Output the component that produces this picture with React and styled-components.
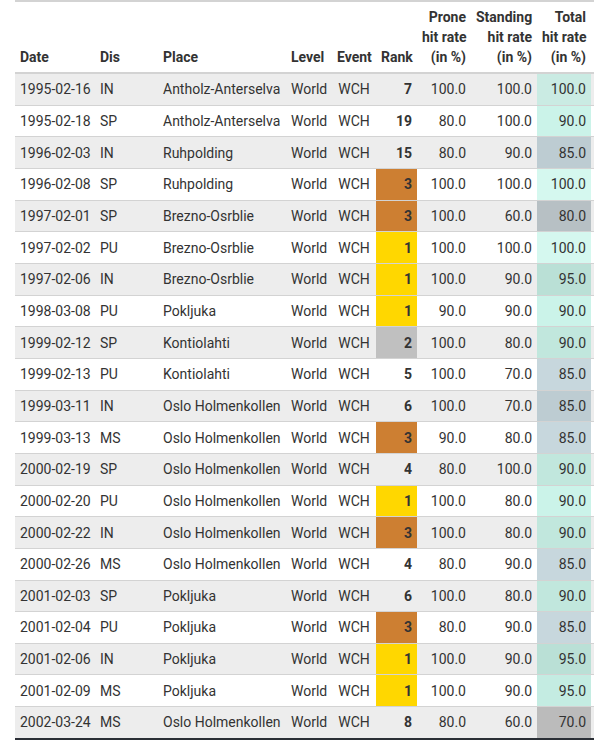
import styled, { createGlobalStyle } from 'styled-components';

const GlobalStyle = createGlobalStyle`
  body {
    margin: 0;
    padding: 0 0 0 15px;
    background: #fff;
    overflow: hidden;
    font-family: Roboto, "Liberation Sans", sans-serif;
  }
`

const rows = [
  ['1995-02-16', 'IN', 'Antholz-Anterselva', 7, '100.0', '100.0', '100.0'],
  ['1995-02-18', 'SP', 'Antholz-Anterselva', 19, '80.0', '100.0', '90.0'],
  ['1996-02-03', 'IN', 'Ruhpolding', 15, '80.0', '90.0', '85.0'],
  ['1996-02-08', 'SP', 'Ruhpolding', 3, '100.0', '100.0', '100.0'],
  ['1997-02-01', 'SP', 'Brezno-Osrblie', 3, '100.0', '60.0', '80.0'],
  ['1997-02-02', 'PU', 'Brezno-Osrblie', 1, '100.0', '100.0', '100.0'],
  ['1997-02-06', 'IN', 'Brezno-Osrblie', 1, '100.0', '90.0', '95.0'],
  ['1998-03-08', 'PU', 'Pokljuka', 1, '90.0', '90.0', '90.0'],
  ['1999-02-12', 'SP', 'Kontiolahti', 2, '100.0', '80.0', '90.0'],
  ['1999-02-13', 'PU', 'Kontiolahti', 5, '100.0', '70.0', '85.0'],
  ['1999-03-11', 'IN', 'Oslo Holmenkollen', 6, '100.0', '70.0', '85.0'],
  ['1999-03-13', 'MS', 'Oslo Holmenkollen', 3, '90.0', '80.0', '85.0'],
  ['2000-02-19', 'SP', 'Oslo Holmenkollen', 4, '80.0', '100.0', '90.0'],
  ['2000-02-20', 'PU', 'Oslo Holmenkollen', 1, '100.0', '80.0', '90.0'],
  ['2000-02-22', 'IN', 'Oslo Holmenkollen', 3, '100.0', '80.0', '90.0'],
  ['2000-02-26', 'MS', 'Oslo Holmenkollen', 4, '80.0', '90.0', '85.0'],
  ['2001-02-03', 'SP', 'Pokljuka', 6, '100.0', '80.0', '90.0'],
  ['2001-02-04', 'PU', 'Pokljuka', 3, '80.0', '90.0', '85.0'],
  ['2001-02-06', 'IN', 'Pokljuka', 1, '100.0', '90.0', '95.0'],
  ['2001-02-09', 'MS', 'Pokljuka', 1, '100.0', '90.0', '95.0'],
  ['2002-03-24', 'MS', 'Oslo Holmenkollen', 8, '80.0', '60.0', '70.0'],
]

const medal = { 1: '#FFD700', 2: '#C0C0C0', 3: '#CD7F32' }

const totalColor = {
  '100.0': '#d5f8ef',
  '95.0': '#c4ece2',
  '90.0': '#cbf3e9',
  '85.0': '#c7d7dd',
  '80.0': '#c1cacf',
  '70.0': '#c5c5c5',
}

function App() {
  return (
    <>
      <GlobalStyle />
      <Table>
        <colgroup>
          <col style={{ width: 80 }} />
          <col style={{ width: 63 }} />
          <col style={{ width: 128 }} />
          <col style={{ width: 46 }} />
          <col style={{ width: 44 }} />
          <col style={{ width: 41 }} />
          <col style={{ width: 54 }} />
          <col style={{ width: 66 }} />
          <col style={{ width: 54 }} />
          <col style={{ width: 3 }} />
        </colgroup>
        <thead>
          <tr>
            <Th>Date</Th>
            <Th>Dis</Th>
            <Th>Place</Th>
            <Th>Level</Th>
            <Th align="center">Event</Th>
            <Th align="right">Rank</Th>
            <Th align="right">Prone<br />hit rate<br />(in %)</Th>
            <Th align="right">Standing<br />hit rate<br />(in %)</Th>
            <Th align="right">Total<br />hit rate<br />(in %)</Th>
            <Th />
          </tr>
        </thead>
        <tbody>
          {rows.map((r, i) => (
            <Row key={r[0]} $striped={i % 2 === 0}>
              <Td>{r[0]}</Td>
              <Td>{r[1]}</Td>
              <Td>{r[2]}</Td>
              <Td>World</Td>
              <Td align="center">WCH</Td>
              <RankCell $fill={medal[r[3]]}>{r[3]}</RankCell>
              <Td align="right">{r[4]}</Td>
              <Td align="right">{r[5]}</Td>
              <TotalCell $fill={totalColor[r[6]]} $striped={i % 2 === 0}>{r[6]}</TotalCell>
              <Td />
            </Row>
          ))}
        </tbody>
      </Table>
    </>
  )
}

const Table = styled.table`
  border-collapse: collapse;
  table-layout: fixed;
  width: 579px;
  font-size: 14px;
  line-height: 20px;
  color: #333;
  border-top: 2px solid #d3d3d3;
  border-bottom: 2px solid #2b2f36;
`
const Th = styled.th`
  text-align: ${p => p.align || 'left'};
  vertical-align: bottom;
  font-weight: 700;
  padding: 5px 5px;
  white-space: nowrap;
  border-bottom: 2px solid #d3d3d3;
`
const Row = styled.tr`
  background: ${p => (p.$striped ? '#ededed' : '#fff')};
  border-top: 1px solid #d3d3d3;
  &:first-child {
    border-top: none;
  }
`
const Td = styled.td`
  text-align: ${p => p.align || 'left'};
  padding: 5.33px 5px;
  white-space: nowrap;
  overflow: hidden;
`
const RankCell = styled(Td)`
  text-align: right;
  font-weight: 700;
  background: ${p => p.$fill || 'transparent'};
`
const TotalCell = styled(Td)`
  text-align: right;
  background: ${p =>
    p.$striped
      ? `linear-gradient(rgba(0,0,0,0.05), rgba(0,0,0,0.05)), ${p.$fill}`
      : p.$fill};
`

export default App
